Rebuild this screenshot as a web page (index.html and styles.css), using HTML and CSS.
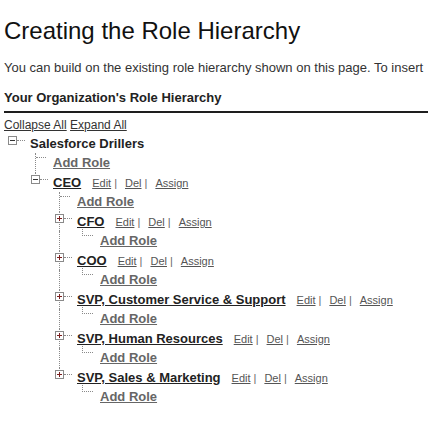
FILE: index.html
```html
<!DOCTYPE html>
<html lang="en">
<head>
<meta charset="utf-8">
<title>Creating the Role Hierarchy</title>
<link rel="stylesheet" href="styles.css">
</head>
<body>
<div class="page">
  <h1 class="title">Creating the Role Hierarchy</h1>
  <p class="intro">You can build on the existing role hierarchy shown on this page. To insert</p>
  <h2 class="sub">Your Organization's Role Hierarchy</h2>
  <div class="toolbar"><a href="#">Collapse All</a> <a href="#">Expand All</a></div>

  <div class="tree">
    <div class="row node in-0">
      <span class="tw"><svg class="tg" width="9" height="9" viewBox="0 0 9 9"><rect x="0.5" y="0.5" width="8" height="8" fill="#fff" stroke="#8a8a8a"/><path d="M2 4.5h5" stroke="#333"/></svg></span>
      <span class="hl"></span>
      <span class="lbl"><span class="org">Salesforce Drillers</span></span>
    </div>
    <div class="row add in-1a">
      <span class="vl"><span class="hk"></span></span>
      <a class="addr" href="#">Add Role</a>
    </div>

    <div class="row node in-1">
      <span class="tw end"><svg class="tg" width="9" height="9" viewBox="0 0 9 9"><rect x="0.5" y="0.5" width="8" height="8" fill="#fff" stroke="#8a8a8a"/><path d="M2 4.5h5" stroke="#333"/></svg></span>
      <span class="hl"></span>
      <span class="lbl"><a class="nm" href="#">CEO</a><span class="acts"><a href="#">Edit</a><span class="sep">|</span><a href="#">Del</a><span class="sep">|</span><a href="#">Assign</a></span></span>
    </div>
    <div class="row add in-2a">
      <span class="vl"><span class="hk"></span></span>
      <a class="addr" href="#">Add Role</a>
    </div>

    <div class="row node in-2">
      <span class="tw mid"><svg class="tg" width="9" height="9" viewBox="0 0 9 9"><rect x="0.5" y="0.5" width="8" height="8" fill="#fff" stroke="#8a8a8a"/><path d="M2 4.5h5M4.5 2v5" stroke="#7a1f1f"/></svg></span>
      <span class="hl"></span>
      <span class="lbl"><a class="nm" href="#">CFO</a><span class="acts"><a href="#">Edit</a><span class="sep">|</span><a href="#">Del</a><span class="sep">|</span><a href="#">Assign</a></span></span>
    </div>
    <div class="row add in-2a">
      <span class="vl wide"></span><span class="el"></span>
      <a class="addr" href="#">Add Role</a>
    </div>

    <div class="row node in-2">
      <span class="tw mid"><svg class="tg" width="9" height="9" viewBox="0 0 9 9"><rect x="0.5" y="0.5" width="8" height="8" fill="#fff" stroke="#8a8a8a"/><path d="M2 4.5h5M4.5 2v5" stroke="#7a1f1f"/></svg></span>
      <span class="hl"></span>
      <span class="lbl"><a class="nm" href="#">COO</a><span class="acts"><a href="#">Edit</a><span class="sep">|</span><a href="#">Del</a><span class="sep">|</span><a href="#">Assign</a></span></span>
    </div>
    <div class="row add in-2a">
      <span class="vl wide"></span><span class="el"></span>
      <a class="addr" href="#">Add Role</a>
    </div>

    <div class="row node in-2">
      <span class="tw mid"><svg class="tg" width="9" height="9" viewBox="0 0 9 9"><rect x="0.5" y="0.5" width="8" height="8" fill="#fff" stroke="#8a8a8a"/><path d="M2 4.5h5M4.5 2v5" stroke="#7a1f1f"/></svg></span>
      <span class="hl"></span>
      <span class="lbl"><a class="nm" href="#">SVP, Customer Service &amp; Support</a><span class="acts"><a href="#">Edit</a><span class="sep">|</span><a href="#">Del</a><span class="sep">|</span><a href="#">Assign</a></span></span>
    </div>
    <div class="row add in-2a">
      <span class="vl wide"></span><span class="el"></span>
      <a class="addr" href="#">Add Role</a>
    </div>

    <div class="row node in-2">
      <span class="tw mid"><svg class="tg" width="9" height="9" viewBox="0 0 9 9"><rect x="0.5" y="0.5" width="8" height="8" fill="#fff" stroke="#8a8a8a"/><path d="M2 4.5h5M4.5 2v5" stroke="#7a1f1f"/></svg></span>
      <span class="hl"></span>
      <span class="lbl"><a class="nm" href="#">SVP, Human Resources</a><span class="acts"><a href="#">Edit</a><span class="sep">|</span><a href="#">Del</a><span class="sep">|</span><a href="#">Assign</a></span></span>
    </div>
    <div class="row add in-2a">
      <span class="vl wide"></span><span class="el"></span>
      <a class="addr" href="#">Add Role</a>
    </div>

    <div class="row node in-2">
      <span class="tw end"><svg class="tg" width="9" height="9" viewBox="0 0 9 9"><rect x="0.5" y="0.5" width="8" height="8" fill="#fff" stroke="#8a8a8a"/><path d="M2 4.5h5M4.5 2v5" stroke="#7a1f1f"/></svg></span>
      <span class="hl"></span>
      <span class="lbl"><a class="nm" href="#">SVP, Sales &amp; Marketing</a><span class="acts"><a href="#">Edit</a><span class="sep">|</span><a href="#">Del</a><span class="sep">|</span><a href="#">Assign</a></span></span>
    </div>
    <div class="row add in-3">
      <span class="el"></span>
      <a class="addr" href="#">Add Role</a>
    </div>
  </div>
</div>
</body>
</html>
```
FILE: styles.css
```css
html, body {
  margin: 0;
  padding: 0;
  background: #fff;
  overflow: hidden;
}

.page {
  padding: 0 4px;
  font-family: "Liberation Sans", Arial, sans-serif;
  color: #333;
}

.title {
  margin: 17px 0 0;
  font-size: 24px;
  line-height: 28px;
  font-weight: normal;
  color: #111;
}

.intro {
  margin: 15px 0 0;
  font-size: 13px;
  line-height: 15px;
  white-space: nowrap;
  color: #333;
}

.sub {
  margin: 15px -4px 0 0;
  padding-bottom: 6px;
  border-bottom: 2px solid #1e1e1e;
  font-size: 13px;
  line-height: 15px;
  font-weight: bold;
  color: #222;
}

.toolbar {
  margin-top: 5px;
  font-size: 12px;
  line-height: 15px;
}

.toolbar a {
  color: #333;
  text-decoration: underline;
}

.tree {
  margin-top: 1px;
}

.row {
  display: flex;
  align-items: flex-start;
  height: 19px;
  line-height: 19px;
  white-space: nowrap;
}

.row.add {
  height: 20px;
}

.in-0 { padding-left: 4px; }
.in-1 { padding-left: 27px; }
.in-1a { padding-left: 31px; }
.in-2 { padding-left: 51px; }
.in-2a { padding-left: 55px; }
.in-3 { padding-left: 78px; }

.tw {
  flex: none;
  width: 9px;
  align-self: stretch;
}

.tw.mid {
  background: linear-gradient(#8a8a8a 50%, transparent 50%) 4px 0 / 1px 2px repeat-y;
}

.tw.end {
  background: linear-gradient(#8a8a8a 50%, transparent 50%) 4px 0 / 1px 2px no-repeat;
}

.tg {
  display: block;
  margin-top: 2px;
}

.hl {
  flex: none;
  width: 8px;
  height: 0;
  margin-top: 6px;
  margin-right: 5px;
  border-top: 1px dotted #8a8a8a;
}

.vl {
  flex: none;
  align-self: stretch;
  width: 10px;
  border-left: 1px dotted #8a8a8a;
  margin-right: 7px;
}

.vl.wide {
  width: 22px;
  margin-right: 0;
}

.hk {
  display: block;
  width: 10px;
  height: 4px;
  border-bottom: 1px dotted #8a8a8a;
}

.el {
  flex: none;
  width: 10px;
  height: 6px;
  margin-top: -2px;
  margin-right: 7px;
  border-left: 1px dotted #8a8a8a;
  border-bottom: 1px dotted #8a8a8a;
}

.lbl {
  font-size: 13px;
}

.org {
  font-weight: bold;
  color: #222;
}

.nm {
  font-weight: bold;
  color: #222;
  text-decoration: underline;
}

.acts {
  margin-left: 11px;
  font-size: 11px;
  color: #555;
}

.acts a {
  color: #555;
  text-decoration: underline;
}

.sep {
  margin: 0 8px 0 3px;
  color: #666;
}

.addr {
  font-size: 13px;
  font-weight: bold;
  color: #666;
  text-decoration: underline;
}
```
